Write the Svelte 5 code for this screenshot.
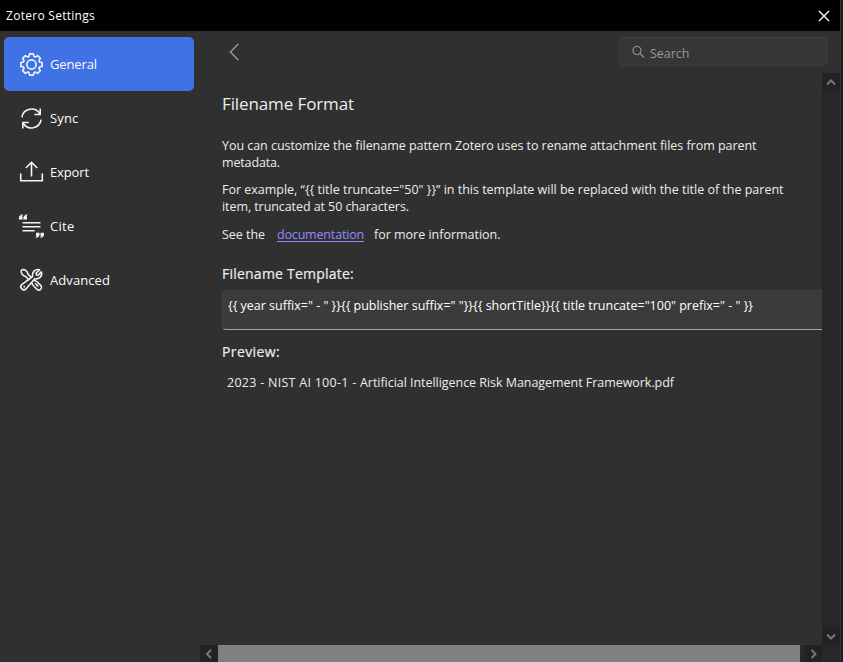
<script>
  const items = [
    { id: 'general', label: 'General', w: 47 },
    { id: 'sync', label: 'Sync', w: 28.5 },
    { id: 'export', label: 'Export', w: 39 },
    { id: 'cite', label: 'Cite', w: 24.5 },
    { id: 'advanced', label: 'Advanced', w: 60 }
  ];
  const template = '{{ year suffix=" - " }}{{ publisher suffix=" "}}{{ shortTitle}}{{ title truncate="100" prefix=" - " }}';
  const example = 'For example, “{{ title truncate="50" }}” in this template will be replaced with the title of the parent';
  const prefix = '2023 - NIST AI 100-1 - ';

  // Outline of an eight-toothed cog centred on (12, 12).
  const cog = Array.from({ length: 8 }, (_, i) =>
    [[-18, 8.4], [-10, 10.8], [10, 10.8], [18, 8.4]].map(([d, r]) => {
      const a = ((i * 45 + d) * Math.PI) / 180;
      return `${(12 + r * Math.sin(a)).toFixed(2)},${(12 - r * Math.cos(a)).toFixed(2)}`;
    }).join(' ')
  ).join(' ');

  // Spreads or tightens the letters so that a line takes the given width.
  function fit(node, width) {
    const natural = node.getBoundingClientRect().width;
    node.style.letterSpacing = `${(width - natural) / node.textContent.length}px`;
  }
</script>

<div class="window">
  <header>
    <span use:fit={89}>Zotero Settings</span>
    <svg width="12" height="12" viewBox="0 0 12 12"><path d="M1 1 11 11M11 1 1 11" stroke="#fff" stroke-width="1.4" /></svg>
  </header>
  <div class="body">
    <nav>
      {#each items as item}
        <div class="item" class:active={item.id === 'general'}>
          <svg width="26" height="26" viewBox="-1.5 -1.5 26 26" fill="none" stroke="#f4f4f4" stroke-width="1.6">
            {#if item.id === 'general'}
              <polygon points={cog} stroke-linejoin="round" />
              <circle cx="12" cy="12" r="4.6" />
            {:else if item.id === 'sync'}
              <path d="M2.4 10.8A9.7 9.7 0 0 1 20.4 7.5M20.7 2V8H14.8M21.6 13.2A9.7 9.7 0 0 1 3.6 16.5M3.3 22V16H9.2" />
            {:else if item.id === 'export'}
              <path d="M1.2 13V20.3H22.8V13M12 16V2M6.3 7.5 12 1.8 17.7 7.5" />
            {:else if item.id === 'cite'}
              <path d="M3 8.3H21M3 12.3H21M3 16.3H15" />
              <g fill="#f4f4f4" stroke="none">
                <path d="M3.2 -.2C.7 .2-.6 1.8-.6 3.6V5H3V1.8H1.9Q2.2 1.1 3.2 .9ZM7.7 -.2C5.2 .2 3.9 1.8 3.9 3.6V5H7.5V1.8H6.4Q6.7 1.1 7.7 .9Z" />
                <path transform="translate(24 23.3) rotate(180)" d="M3.2 -.2C.7 .2-.6 1.8-.6 3.6V5H3V1.8H1.9Q2.2 1.1 3.2 .9ZM7.7 -.2C5.2 .2 3.9 1.8 3.9 3.6V5H7.5V1.8H6.4Q6.7 1.1 7.7 .9Z" />
              </g>
            {:else}
              <g stroke-linejoin="round" transform="translate(.3 -.2) scale(.96)">
                <path d="M9.7 12.4 6.2 8.6C3.2 7.8 1.8 5.8 1.4 3.2A1.9 1.9 0 0 1 3.4 1.2C6 1.6 8 3.2 8.6 6.2L12 9.7M14.7 12.6Q16.5 12.6 18 14L21.8 17.8A2.8 2.8 0 0 1 17.8 21.8L14 18Q12.6 16.6 12.6 14.8M16 15.6 19.2 18.8" />
                <path d="M13.3 8.6C12.6 3.6 16.4 .2 20.6 1.6L16.9 5.1 17.3 6.9 19.1 7.2 22.5 3.6C24 8 20.2 11.6 15.6 11L6.6 21.4A3.2 3.2 0 0 1 2 16.9Z" />
                <circle cx="4.6" cy="19.2" r=".9" fill="#f4f4f4" stroke="none" />
              </g>
            {/if}
          </svg>
          <span use:fit={item.w}>{item.label}</span>
        </div>
      {/each}
    </nav>
    <main>
      <div class="toolbar">
        <svg width="12" height="18" viewBox="0 0 12 18" fill="none"><path d="M10.4 1 2.4 9 10.4 17" stroke="#999" stroke-width="1.4" /></svg>
        <div class="search">
          <svg width="13" height="13" viewBox="0 0 13 13" fill="none" stroke="#999" stroke-width="1.1"><circle cx="5" cy="5.5" r="4" /><path d="M8 8.5 12 12.5" /></svg>
          <span use:fit={39.5}>Search</span>
        </div>
      </div>
      <div class="view">
        <div class="pane">
          <h1><span use:fit={132}>Filename Format</span></h1>
          <p>
            <span use:fit={534.5}>You can customize the filename pattern Zotero uses to rename attachment files from parent</span><br />
            <span use:fit={58}>metadata.</span>
          </p>
          <p>
            <span use:fit={561.5}>{example}</span><br />
            <span use:fit={187}>item, truncated at 50 characters.</span>
          </p>
          <p class="see">
            <span use:fit={43}>See the</span>
            <a href="#documentation"><span use:fit={87}>documentation</span></a>
            <span use:fit={126.5}>for more information.</span>
          </p>
          <h2><span use:fit={132}>Filename Template:</span></h2>
          <div class="field"><span use:fit={525}>{template}</span></div>
          <h2 class="second"><span use:fit={58}>Preview:</span></h2>
          <div class="preview">
            <span use:fit={133}>{prefix}</span><span use:fit={314}>Artificial Intelligence Risk Management Framework.pdf</span>
          </div>
        </div>
        <div class="vbar">
          <i><svg width="10" height="7" viewBox="0 0 10 7"><path d="M1 5.5 5 1.5 9 5.5" /></svg></i>
          <i><svg width="10" height="7" viewBox="0 0 10 7"><path d="M1 1.5 5 5.5 9 1.5" /></svg></i>
        </div>
      </div>
      <div class="hbar">
        <i><svg width="7" height="10" viewBox="0 0 7 10"><path d="M5 1 1 5 5 9" /></svg></i>
        <b></b>
        <i><svg width="7" height="10" viewBox="0 0 7 10"><path d="M1.5 1 5.5 5 1.5 9" /></svg></i>
      </div>
    </main>
  </div>
</div>

<style>
  :global(body) { background: #1b1b1c; overflow: hidden; }
  .window {
    box-sizing: border-box; width: 841px; height: 662px; display: flex; flex-direction: column;
    border-right: 1px solid #353535; background: #303030; color: #ececec;
    font: 12.5px/17px "Open Sans", "Noto Sans", sans-serif;
  }
  span { white-space: pre; }
  svg { display: block; flex: none; }
  header {
    height: 31px; box-sizing: border-box; padding: 0 10px 0 6px; display: flex; align-items: center;
    justify-content: space-between; background: #000; color: #fff; font-size: 12px;
  }
  .body { flex: 1; display: flex; min-height: 0; }
  nav { width: 200px; box-sizing: border-box; padding: 6px 6px 0 4px; }
  .item {
    height: 54px; box-sizing: border-box; padding-left: 14px; display: flex; align-items: center; gap: 6px;
    border-radius: 5px; font-size: 13px; color: #fbfbfb;
  }
  .active { background: #4072e5; }
  main { flex: 1; display: flex; flex-direction: column; min-width: 0; }
  .toolbar { height: 42px; box-sizing: border-box; padding: 6px 13px 0 28px; display: flex; justify-content: space-between; }
  .toolbar > svg { margin-top: 6px; }
  .search {
    width: 208px; height: 29px; box-sizing: border-box; padding: 4px 0 0 12px; display: flex; align-items: center; gap: 5px;
    border: 1px solid #3d3d3d; border-radius: 4px; background: #363636; color: #999;
  }
  .search svg { margin-top: -4px; }
  .view { flex: 1; display: flex; min-height: 0; }
  .pane { flex: 1; padding: 19px 0 0 22px; min-width: 0; }
  h1 { margin: 0 0 22px; font-size: 17px; line-height: 23px; font-weight: 400; }
  p { margin: 0 0 10px; }
  .see { display: flex; margin-top: 11px; }
  .see a { margin: 0 10px 0 12px; color: #928cff; text-underline-offset: 2px; }
  h2 { margin: 21px 0 6px; font-size: 14px; line-height: 20px; font-weight: 400; -webkit-text-stroke: .2px #ececec; }
  .field {
    height: 40px; box-sizing: border-box; padding: 6px 0 0 5px; border: solid #424242; border-width: 1px 0 1px 1px;
    border-bottom-color: #a3a3a3; border-radius: 4px 0 0 4px; background: #3b3b3b; color: #fff;
  }
  h2.second { margin: 12px 0 12px; }
  .preview { display: flex; padding-left: 5px; }
  i { width: 18px; height: 18px; display: flex; align-items: center; justify-content: center; background: #222224; }
  i path { fill: none; stroke: #777; stroke-width: 2; }
  .vbar { width: 18px; display: flex; flex-direction: column; justify-content: space-between; background: #28282a; }
  .hbar { height: 17px; display: flex; background: #28282a; padding-right: 18px; }
  .hbar b { width: 582px; margin-right: 4px; background: #808080; }
</style>
